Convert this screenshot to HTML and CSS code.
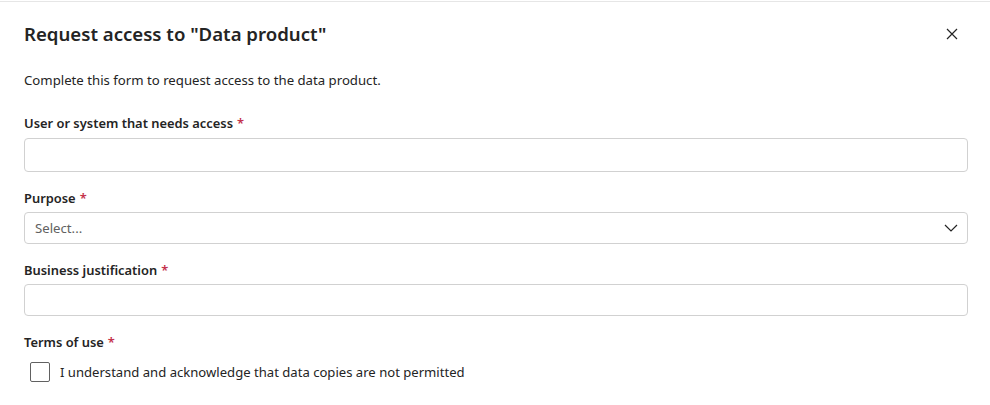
FILE: index.html
```html
<!DOCTYPE html>
<html>
<head>
<meta charset="utf-8">
<link rel="stylesheet" href="styles.css">
</head>
<body>
<div class="topline"></div>
<div class="dialog">
  <div class="header">
    <h1 class="title">Request access to "Data product"</h1>
    <button class="close" aria-label="Close">
      <svg width="12" height="12" viewBox="0 0 12 12"><path d="M1 1 L11 11 M11 1 L1 11" stroke="#242424" stroke-width="1.2" fill="none"/></svg>
    </button>
  </div>
  <p class="desc">Complete this form to request access to the data product.</p>
  <div class="field first">
    <label class="label">User or system that needs access<span class="req">*</span></label>
    <div class="input"></div>
  </div>
  <div class="field second">
    <label class="label">Purpose<span class="req">*</span></label>
    <div class="input select">
      <span class="placeholder">Select...</span>
      <svg width="14" height="8" viewBox="0 0 14 8"><path d="M1 1 L7 7 L13 1" stroke="#242424" stroke-width="1.2" fill="none"/></svg>
    </div>
  </div>
  <div class="field">
    <label class="label">Business justification<span class="req">*</span></label>
    <div class="input"></div>
  </div>
  <div class="field">
    <label class="label">Terms of use<span class="req">*</span></label>
    <div class="check">
      <span class="box"></span>
      <span class="check-label">I understand and acknowledge that data copies are not permitted</span>
    </div>
  </div>
</div>
</body>
</html>
```
FILE: styles.css
```css
* { box-sizing: border-box; }
body {
  margin: 0;
  background: #fff;
  font-family: "Segoe UI", "Noto Sans", "Open Sans", sans-serif;
  color: #242424;
}
.topline {
  height: 2px;
  border-bottom: 1px solid #e6e6e6;
}
.dialog {
  padding: 18px 22px 0 24px;
}
.header {
  display: flex;
  align-items: center;
  justify-content: space-between;
  height: 28px;
}
.title {
  margin: 0;
  font-size: 18.6px;
  line-height: 28px;
  font-weight: 600;
}
.close {
  border: 0;
  background: none;
  padding: 0;
  width: 32px;
  height: 28px;
  display: flex;
  align-items: center;
  justify-content: center;
}
.desc {
  margin: 22px 0 0;
  font-size: 13.2px;
  line-height: 20px;
}
.field {
  margin-top: 16px;
  display: flex;
  flex-direction: column;
  gap: 4px;
}
.field.first { margin-top: 23px; gap: 5px; }
.field.second { margin-top: 16px; }
.label {
  font-size: 12.9px;
  line-height: 20px;
  font-weight: 600;
}
.req { color: #c4314b; font-weight: 600; padding-left: 4px; }
.input {
  height: 32px;
  border: 1px solid #d1d1d1;
  border-radius: 4px;
  background: #fff;
}
.first .input { height: 34px; }
.select {
  display: flex;
  align-items: center;
  justify-content: space-between;
  padding: 0 9px 0 10px;
}
.placeholder {
  font-size: 13.2px;
  color: #616161;
}
.check {
  display: flex;
  align-items: center;
  padding-left: 6px;
  margin-top: 6px;
  gap: 10px;
}
.box {
  width: 20px;
  height: 20px;
  border: 1px solid #616161;
  border-radius: 2px;
}
.check-label {
  font-size: 13.1px;
  line-height: 20px;
}
```
